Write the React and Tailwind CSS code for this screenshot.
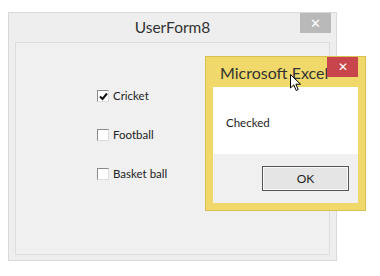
import React from "react";

function Check({ checked, label }) {
  return (
    <div className="flex items-center gap-[4px] h-[12px]">
      <div className="w-[12px] h-[12px] bg-white border border-[#8a8a8a] border-r-[#dcdcdc] border-b-[#dcdcdc] flex items-center justify-center">
        {checked && (
          <svg width="9" height="9" viewBox="0 0 9 9">
            <path d="M1 4.5 L3.5 7 L8 1.5" stroke="#111" strokeWidth="2" fill="none" />
          </svg>
        )}
      </div>
      <span className="text-[11.5px] text-[#222] leading-none">{label}</span>
    </div>
  );
}

export default function App() {
  return (
    <div
      className="relative w-[380px] h-[276px] bg-white overflow-hidden"
      style={{ fontFamily: 'Lato, "Noto Sans", sans-serif' }}
    >
      <div className="ml-[8px] mt-[12px] w-[329px] h-[249px] bg-[#eeeeee] border border-[#d9d9d9] flex flex-col">
        <div className="relative h-[29px] flex items-center justify-center">
          <span className="text-[15.5px] text-[#333] leading-none">UserForm8</span>
          <div className="absolute right-[5px] top-0 w-[31px] h-[20px] bg-[#b9b9b9] flex items-center justify-center">
            <span className="text-white text-[13px] leading-none">✕</span>
          </div>
        </div>
        <div className="mx-[6px] mb-[5px] flex-1 border border-[#dddddd] bg-[#f0f0f0] flex flex-col gap-[27px] pl-[81px] pt-[47px]">
          <Check checked label="Cricket" />
          <Check label="Football" />
          <Check label="Basket ball" />
        </div>
      </div>

      <div className="absolute left-[205px] top-[56px] w-[161px] h-[155px] bg-[#f0d96a] border border-[#d9c050] flex flex-col px-[7px] pb-[7px]">
        <div className="relative h-[30px] flex items-center">
          <span className="ml-[7px] mt-[2px] text-[16px] text-[#333] leading-none">Microsoft Excel</span>
          <div className="absolute right-0 top-0 w-[31px] h-[20px] bg-[#c8464b] flex items-center justify-center">
            <span className="text-white text-[12px] leading-none">✕</span>
          </div>
        </div>
        <div className="h-[67px] bg-white flex items-center pl-[13px] pt-[5px]">
          <span className="text-[11.5px] text-[#222] leading-none">Checked</span>
        </div>
        <div className="flex-1 bg-[#f0f0f0] flex justify-end items-start pt-[12px] pr-[9px]">
          <div className="w-[87px] h-[25px] border border-[#555] bg-[#e5e5e5] flex items-center justify-center shadow-[inset_0_0_0_1px_#fafafa]">
            <span className="text-[12px] text-[#222] leading-none">OK</span>
          </div>
        </div>
      </div>

      <svg className="absolute left-[290px] top-[74px]" width="12" height="18" viewBox="0 0 12 18">
        <path d="M0.5 0.5 L0.5 14 L3.8 10.8 L6.2 16.5 L8.2 15.6 L5.9 10.2 L10.5 10.2 Z" fill="white" stroke="black" strokeWidth="1" />
      </svg>
    </div>
  );
}
